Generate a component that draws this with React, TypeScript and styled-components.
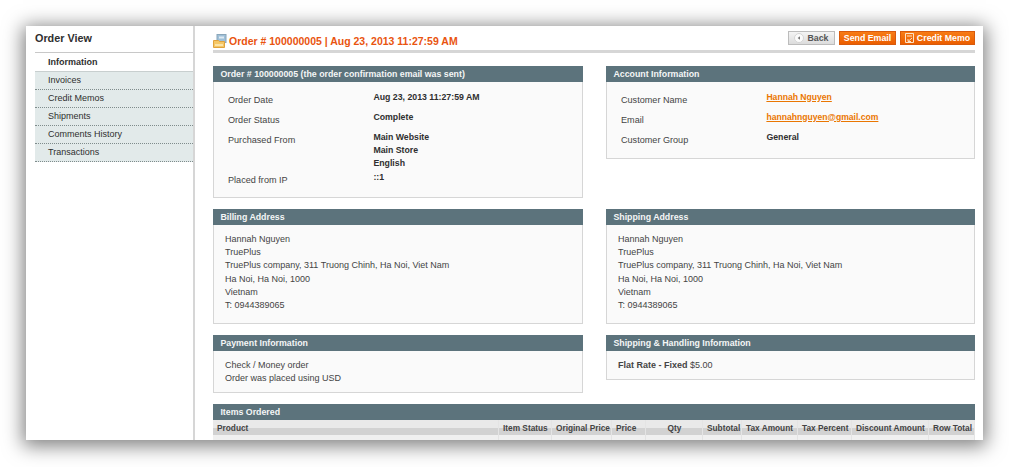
import React from 'react';
import styled, { createGlobalStyle } from 'styled-components';

const GlobalStyle = createGlobalStyle`
  html, body {
    margin: 0;
    padding: 0;
    background: #fff;
  }
  body {
    width: 1009px;
    height: 467px;
    overflow: hidden;
    font-family: 'Liberation Sans', Arial, sans-serif;
    font-size: 10px;
    color: #333;
  }
`;

const Stage = styled.div`
  padding: 26px;
  box-sizing: border-box;
  width: 1009px;
  height: 467px;
`;

const Window = styled.div`
  display: flex;
  width: 957px;
  height: 414px;
  overflow: hidden;
  background: #fff;
  box-shadow: 0 3px 18px 3px rgba(0, 0, 0, 0.5);
`;

const Sidebar = styled.aside`
  width: 158px;
  margin-left: 9px;
  padding-top: 5px;
  box-sizing: content-box;
  border-right: 2px solid #d6d6d6;
  flex-shrink: 0;
`;

const SideTitle = styled.h3`
  margin: 0;
  height: 22px;
  line-height: 14px;
  font-size: 10.8px;
  font-weight: bold;
  color: #2f2f2f;
  border-bottom: 1px solid #c8c8c8;
  box-sizing: border-box;
`;

const SideList = styled.ul`
  list-style: none;
  margin: 0;
  padding: 0;
`;

const SideItem = styled.li<{ $active?: boolean }>`
  height: ${({ $active }) => ($active ? 19 : 18)}px;
  line-height: ${({ $active }) => ($active ? 18 : 17)}px;
  padding-left: 13px;
  box-sizing: border-box;
  font-size: 9px;
  font-weight: ${({ $active }) => ($active ? 'bold' : 'normal')};
  color: #2f2f2f;
  background: ${({ $active }) => ($active ? '#fff' : '#e2eaea')};
  border-bottom: ${({ $active }) => ($active ? '1px solid #c8cfcf' : '1px dotted #7f8c8c')};
`;

const Main = styled.main`
  width: 762px;
  margin-left: 18px;
  padding-top: 5px;
`;

const PageHead = styled.header`
  display: flex;
  justify-content: space-between;
  height: 19px;
  border-bottom: 3px solid #d6d6d6;
  margin-bottom: 13px;
`;

const PageTitle = styled.h2`
  display: flex;
  align-items: center;
  gap: 2px;
  margin: 0;
  height: 20px;
  font-size: 10.5px;
  font-weight: bold;
  color: #e9540f;
`;

const ButtonRow = styled.div`
  display: flex;
  gap: 4px;
  height: 14px;
`;

const Button = styled.button<{ $grey?: boolean; $width: number }>`
  display: flex;
  align-items: center;
  justify-content: center;
  gap: 3px;
  width: ${({ $width }) => $width}px;
  height: 14px;
  padding: 0;
  font-family: inherit;
  font-size: 8.8px;
  font-weight: bold;
  color: ${({ $grey }) => ($grey ? '#555' : '#fff')};
  background: ${({ $grey }) =>
    $grey ? 'linear-gradient(#f4f4f4, #dcdcdc)' : 'linear-gradient(#f77c16, #eb5e00)'};
  border: 1px solid ${({ $grey }) => ($grey ? '#bcbcbc' : '#d85a0c')};
`;

const Row = styled.div`
  display: grid;
  grid-template-columns: 370px 369px;
  justify-content: space-between;
  margin-bottom: 11px;
  align-items: start;
`;

const SectionHead = styled.h4`
  margin: 0;
  height: 16px;
  padding-left: 7.4px;
  line-height: 16px;
  font-size: 8.8px;
  font-weight: bold;
  color: #f4f6f6;
  background: #5c737c;
`;

const SectionBody = styled.div<{ $height: number }>`
  height: ${({ $height }) => $height}px;
  box-sizing: border-box;
  background: #fafafa;
  border: 1px solid #d6d6d6;
  border-top: 0;
`;

const InfoGrid = styled.dl`
  display: grid;
  grid-template-columns: 145.4px 1fr;
  margin: 0;
  padding: 8px 0 0 14px;
`;

const InfoLabel = styled.dt<{ $height: number }>`
  height: ${({ $height }) => $height}px;
  line-height: 20px;
  font-size: 9.1px;
  color: #444;
`;

const InfoValue = styled.dd`
  margin: 0.5px 0 0;
  font-size: 8.75px;
  font-weight: bold;
  line-height: 13px;
  color: #2f2f2f;
`;

const OrangeLink = styled.a`
  font-size: 8.6px;
  color: #ea7601;
  text-decoration: underline;
`;

const AddressBlock = styled.address`
  padding: 8px 0 0 11px;
  font-style: normal;
  font-size: 9px;
  line-height: 13.2px;
  color: #444;
`;

const ItemsRow = styled.div`
  display: grid;
  grid-template-columns: 286px 53px 60px 34px 57px 39px 56px 54px 77px 46px;
  height: 20px;
`;

const ItemsHeadCell = styled.div<{ $center?: boolean; $right?: boolean }>`
  height: 20px;
  box-sizing: border-box;
  padding: 1px 3px 0 4px;
  line-height: 14px;
  font-size: 8.3px;
  font-weight: bold;
  white-space: nowrap;
  color: #444;
  text-align: ${({ $center, $right }) => ($center ? 'center' : $right ? 'right' : 'left')};
  border-right: 1px solid #e4e4e4;
  background: linear-gradient(#e9e9e9 0, #e9e9e9 8px, #d2d2d2 8px, #d2d2d2 15px, #f0f0f0 15px);
`;

const columns = [
  { label: 'Product' },
  { label: 'Item Status' },
  { label: 'Original Price' },
  { label: 'Price' },
  { label: 'Qty', center: true },
  { label: 'Subtotal', right: true },
  { label: 'Tax Amount' },
  { label: 'Tax Percent' },
  { label: 'Discount Amount' },
  { label: 'Row Total' },
];

const sideTabs = ['Invoices', 'Credit Memos', 'Shipments', 'Comments History', 'Transactions'];

function OrderIcon() {
  return (
    <svg width="14" height="14" viewBox="0 0 14 14">
      <rect x="4" y="0.5" width="9" height="8" fill="#9fc0d8" stroke="#8aa6ba" />
      <rect x="6" y="2.5" width="5" height="2" fill="#dfeaf2" />
      <path d="M.5 6.5h5l1 1h5v6h-11z" fill="#f5c765" stroke="#e0a23c" />
      <path d="M2 10h8v2H2z" fill="#fbe3a6" />
    </svg>
  );
}

function BackIcon() {
  return (
    <svg width="10" height="10" viewBox="0 0 10 10">
      <circle cx="5" cy="5" r="4.5" fill="#fbfbfb" stroke="#d4d4d4" />
      <path d="M6 3.2v3.6L3.6 5z" fill="#777" />
    </svg>
  );
}

function MemoIcon() {
  return (
    <svg width="9" height="10" viewBox="0 0 9 10" fill="none" stroke="#fde3c8">
      <path d="M.5 .5h8v9h-8z" />
      <path d="M2 3h5M7 5L3 8.5M3 6v2.5h3" />
    </svg>
  );
}

export default function App() {
  return (
    <Stage>
      <GlobalStyle />
      <Window>
        <Sidebar>
          <SideTitle>Order View</SideTitle>
          <SideList>
            <SideItem $active>Information</SideItem>
            {sideTabs.map((tab) => (
              <SideItem key={tab}>{tab}</SideItem>
            ))}
          </SideList>
        </Sidebar>
        <Main>
          <PageHead>
            <PageTitle>
              <OrderIcon />
              Order # 100000005 | Aug 23, 2013 11:27:59 AM
            </PageTitle>
            <ButtonRow>
              <Button $grey $width={47}>
                <BackIcon />
                Back
              </Button>
              <Button $width={57}>Send Email</Button>
              <Button $width={75}>
                <MemoIcon />
                Credit Memo
              </Button>
            </ButtonRow>
          </PageHead>

          <Row>
            <section>
              <SectionHead>Order # 100000005 (the order confirmation email was sent)</SectionHead>
              <SectionBody $height={116}>
                <InfoGrid>
                  <InfoLabel $height={20}>Order Date</InfoLabel>
                  <InfoValue>Aug 23, 2013 11:27:59 AM</InfoValue>
                  <InfoLabel $height={20}>Order Status</InfoLabel>
                  <InfoValue>Complete</InfoValue>
                  <InfoLabel $height={40}>Purchased From</InfoLabel>
                  <InfoValue>
                    Main Website
                    <br />
                    Main Store
                    <br />
                    English
                  </InfoValue>
                  <InfoLabel $height={20}>Placed from IP</InfoLabel>
                  <InfoValue>::1</InfoValue>
                </InfoGrid>
              </SectionBody>
            </section>
            <section>
              <SectionHead>Account Information</SectionHead>
              <SectionBody $height={77}>
                <InfoGrid>
                  <InfoLabel $height={20}>Customer Name</InfoLabel>
                  <InfoValue>
                    <OrangeLink>Hannah Nguyen</OrangeLink>
                  </InfoValue>
                  <InfoLabel $height={20}>Email</InfoLabel>
                  <InfoValue>
                    <OrangeLink>hannahnguyen@gmail.com</OrangeLink>
                  </InfoValue>
                  <InfoLabel $height={20}>Customer Group</InfoLabel>
                  <InfoValue>General</InfoValue>
                </InfoGrid>
              </SectionBody>
            </section>
          </Row>

          <Row>
            {['Billing Address', 'Shipping Address'].map((title) => (
              <section key={title}>
                <SectionHead>{title}</SectionHead>
                <SectionBody $height={99}>
                  <AddressBlock>
                    Hannah Nguyen
                    <br />
                    TruePlus
                    <br />
                    TruePlus company, 311 Truong Chinh, Ha Noi, Viet Nam
                    <br />
                    Ha Noi, Ha Noi, 1000
                    <br />
                    Vietnam
                    <br />
                    T: 0944389065
                  </AddressBlock>
                </SectionBody>
              </section>
            ))}
          </Row>

          <Row>
            <section>
              <SectionHead>Payment Information</SectionHead>
              <SectionBody $height={42}>
                <AddressBlock>
                  Check / Money order
                  <br />
                  Order was placed using USD
                </AddressBlock>
              </SectionBody>
            </section>
            <section>
              <SectionHead>Shipping &amp; Handling Information</SectionHead>
              <SectionBody $height={29}>
                <AddressBlock>
                  <b>Flat Rate - Fixed</b> $5.00
                </AddressBlock>
              </SectionBody>
            </section>
          </Row>

          <section>
            <SectionHead>Items Ordered</SectionHead>
            <ItemsRow>
              {columns.map((col) => (
                <ItemsHeadCell key={col.label} $center={col.center} $right={col.right}>
                  {col.label}
                </ItemsHeadCell>
              ))}
            </ItemsRow>
          </section>
        </Main>
      </Window>
    </Stage>
  );
}
